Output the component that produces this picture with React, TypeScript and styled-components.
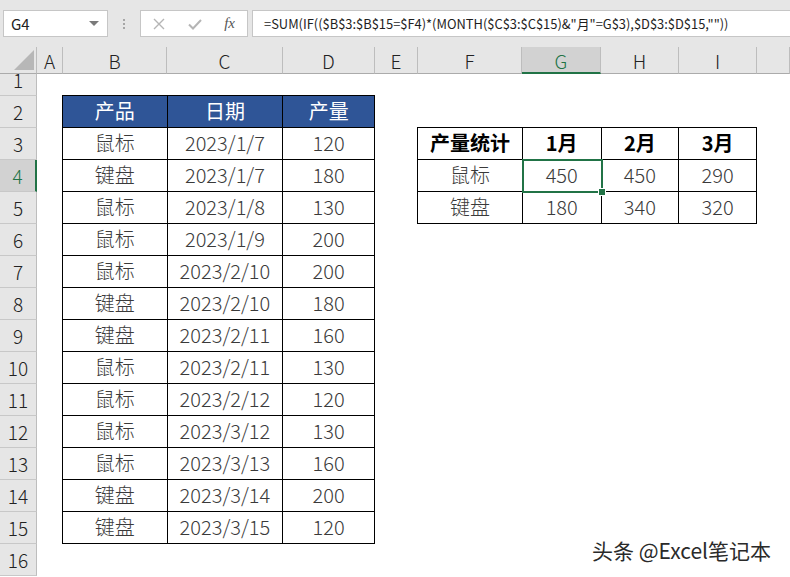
import * as React from 'react';
import styled, { createGlobalStyle } from 'styled-components';

const GlobalStyle = createGlobalStyle`
    html, body {
        margin: 0;
        padding: 0;
        background: #ffffff;
        overflow: hidden;
    }
    body {
        font-family: "Noto Sans CJK SC", "Noto Sans", sans-serif;
    }
`;

const COLS = ['A', 'B', 'C', 'D', 'E', 'F', 'G', 'H', 'I', ''];
const COL_WIDTHS = [26, 104, 116, 92, 43, 104, 79, 78, 78];

const data = [
    ['鼠标', '2023/1/7', '120'],
    ['键盘', '2023/1/7', '180'],
    ['鼠标', '2023/1/8', '130'],
    ['鼠标', '2023/1/9', '200'],
    ['鼠标', '2023/2/10', '200'],
    ['键盘', '2023/2/10', '180'],
    ['键盘', '2023/2/11', '160'],
    ['鼠标', '2023/2/11', '130'],
    ['鼠标', '2023/2/12', '120'],
    ['鼠标', '2023/3/12', '130'],
    ['鼠标', '2023/3/13', '160'],
    ['键盘', '2023/3/14', '200'],
    ['键盘', '2023/3/15', '120'],
];

const stats = [
    ['鼠标', '450', '450', '290'],
    ['键盘', '180', '340', '320'],
];

const Page = styled.div`
    position: relative;
    width: 790px;
    height: 577px;
    overflow: hidden;
    background: #ffffff;
`;

const Toolbar = styled.div`
    display: flex;
    align-items: center;
    height: 47px;
    padding-left: 3px;
    background: #e6e6e6;
    box-sizing: border-box;
`;

const Box = styled.div<{ $w?: number }>`
    display: flex;
    align-items: center;
    height: 27px;
    box-sizing: border-box;
    background: #ffffff;
    border: 1px solid #c6c6c6;
    ${(p) => (p.$w ? `width: ${p.$w}px;` : 'flex: 1;')}
`;

const NameText = styled.span`
    flex: 1;
    padding-left: 7px;
    font-size: 15px;
    color: #222;
`;

const Caret = styled.span`
    width: 0;
    height: 0;
    margin-right: 8px;
    border-left: 5px solid transparent;
    border-right: 5px solid transparent;
    border-top: 5px solid #7a7a7a;
`;

const Grip = styled.div`
    width: 32px;
    display: flex;
    flex-direction: column;
    align-items: center;
    gap: 2px;
    span {
        width: 2px;
        height: 2px;
        background: #a6a6a6;
    }
`;

const FxButtons = styled.div`
    display: flex;
    align-items: center;
    justify-content: space-between;
    width: 100%;
    padding: 0 12px 0 11px;
`;

const FxMark = styled.span`
    font-family: "Liberation Serif", serif;
    font-style: italic;
    font-size: 15px;
    color: #555;
`;

const FormulaBox = styled(Box)`
    margin-left: 4px;
    margin-right: -2px;
`;

const FormulaText = styled.span`
    padding-left: 11px;
    font-size: 12.9px;
    color: #1e1e1e;
    white-space: nowrap;
`;

const Sheet = styled.div`
    display: grid;
    grid-template-columns: 37px ${COL_WIDTHS.map((w) => `${w}px`).join(' ')} 1fr;
    grid-template-rows: 27px 22px repeat(15, 32px);
`;

const Corner = styled.div`
    position: relative;
    background: #e6e6e6;
    border-right: 1px solid #bdbdbd;
    border-bottom: 1px solid #ababab;
    &::after {
        content: '';
        position: absolute;
        right: 2px;
        bottom: 3px;
        border-left: 20px solid transparent;
        border-bottom: 20px solid #b7b7b7;
    }
`;

const ColHead = styled.div<{ $active?: boolean }>`
    display: flex;
    align-items: center;
    justify-content: center;
    box-sizing: border-box;
    background: ${(p) => (p.$active ? '#d2d2d2' : '#e6e6e6')};
    color: ${(p) => (p.$active ? '#217346' : '#222')};
    border-right: 1px solid #bdbdbd;
    border-bottom: ${(p) => (p.$active ? '2px solid #217346' : '1px solid #ababab')};
    font-size: 19px;
    font-weight: 300;
    padding-top: 1px;
`;

const RowHead = styled.div<{ $active?: boolean }>`
    display: flex;
    align-items: flex-end;
    justify-content: center;
    box-sizing: border-box;
    padding-bottom: 1px;
    background: ${(p) => (p.$active ? '#d2d2d2' : '#e6e6e6')};
    color: ${(p) => (p.$active ? '#217346' : '#222')};
    border-right: ${(p) => (p.$active ? '2px solid #217346' : '1px solid #bdbdbd')};
    border-bottom: 1px solid #c8c8c8;
    font-size: 19px;
    font-weight: 300;
    line-height: 28px;
`;

const TableArea = styled.div<{ $col: string; $row: string }>`
    grid-column: ${(p) => p.$col};
    grid-row: ${(p) => p.$row};
    margin-left: -1px;
    margin-top: -1px;
`;

const Table = styled.table`
    border-collapse: collapse;
    table-layout: fixed;
`;

const Cell = styled.td<{ $w?: number; $head?: boolean; $bold?: boolean; $selected?: boolean }>`
    ${(p) => (p.$selected ? 'position: relative;' : '')}
    ${(p) => (p.$w ? `width: ${p.$w}px;` : '')}
    height: 32px;
    padding: 0 0 1px;
    box-sizing: border-box;
    border: 1px solid #000;
    text-align: center;
    vertical-align: middle;
    line-height: 28px;
    font-size: 20px;
    font-weight: ${(p) => (p.$bold ? 700 : p.$head ? 400 : 300)};
    background: ${(p) => (p.$head ? '#2f5597' : '#ffffff')};
    color: ${(p) => (p.$head ? '#ffffff' : p.$bold ? '#000' : '#3a3a3a')};
    white-space: nowrap;
`;

const Selection = styled.div`
    position: absolute;
    z-index: 3;
    left: -1px;
    top: -1px;
    right: -2px;
    bottom: -2px;
    border: 2px solid #217346;
    &::after {
        content: '';
        position: absolute;
        right: -5px;
        bottom: -5px;
        width: 6px;
        height: 6px;
        background: #217346;
        border: 1px solid #fff;
    }
`;

const Watermark = styled.div`
    position: absolute;
    left: 592px;
    top: 535px;
    font-size: 21px;
    color: #2a2a2a;
    text-shadow: 0 0 2px #fff, 0 0 2px #fff;
    white-space: nowrap;
`;

export default function App(): React.ReactElement {
    return (
        <Page>
            <GlobalStyle />
            <Toolbar>
                <Box $w={105}>
                    <NameText>G4</NameText>
                    <Caret />
                </Box>
                <Grip>
                    <span />
                    <span />
                    <span />
                </Grip>
                <Box $w={108}>
                    <FxButtons>
                        <svg width="14" height="14" viewBox="0 0 14 14">
                            <path d="M2 2 L12 12 M12 2 L2 12" stroke="#b5b5b5" strokeWidth="1.4" />
                        </svg>
                        <svg width="16" height="14" viewBox="0 0 16 14">
                            <path d="M2 7.5 L6 11.5 L14 3" stroke="#b5b5b5" strokeWidth="2" fill="none" />
                        </svg>
                        <FxMark>fx</FxMark>
                    </FxButtons>
                </Box>
                <FormulaBox>
                    <FormulaText>
                        =SUM(IF(($B$3:$B$15=$F4)*(MONTH($C$3:$C$15)&amp;"月"=G$3),$D$3:$D$15,""))
                    </FormulaText>
                </FormulaBox>
            </Toolbar>
            <Sheet>
                <Corner />
                {COLS.map((c) => (
                    <ColHead key={c || 'J'} $active={c === 'G'}>
                        {c}
                    </ColHead>
                ))}
                {Array.from({ length: 16 }, (_, i) => (
                    <RowHead
                        key={i}
                        $active={i + 1 === 4}
                        style={{ gridColumn: 1, gridRow: i + 2 }}
                    >
                        {i + 1}
                    </RowHead>
                ))}
                <TableArea $col="3 / 6" $row="3 / 17">
                    <Table>
                        <tbody>
                            <tr>
                                <Cell $w={105} $head>产品</Cell>
                                <Cell $w={116} $head>日期</Cell>
                                <Cell $w={92} $head>产量</Cell>
                            </tr>
                            {data.map((r, i) => (
                                <tr key={i}>
                                    {r.map((v, j) => (
                                        <Cell key={j}>{v}</Cell>
                                    ))}
                                </tr>
                            ))}
                        </tbody>
                    </Table>
                </TableArea>
                <TableArea $col="7 / 11" $row="4 / 7">
                    <Table>
                        <tbody>
                            <tr>
                                <Cell $w={105} $bold>产量统计</Cell>
                                <Cell $w={79} $bold>1月</Cell>
                                <Cell $w={78} $bold>2月</Cell>
                                <Cell $w={78} $bold>3月</Cell>
                            </tr>
                            {stats.map((r, i) => {
                                const sel = (j: number) => i === 0 && j === 1;
                                return (
                                    <tr key={i}>
                                        {r.map((v, j) => (
                                            <Cell key={j} $selected={sel(j)}>
                                                {v}
                                                {sel(j) && <Selection />}
                                            </Cell>
                                        ))}
                                    </tr>
                                );
                            })}
                        </tbody>
                    </Table>
                </TableArea>
            </Sheet>
            <Watermark>头条 @Excel笔记本</Watermark>
        </Page>
    );
}
